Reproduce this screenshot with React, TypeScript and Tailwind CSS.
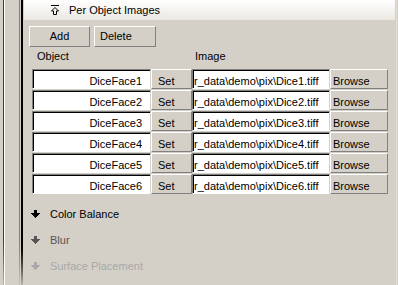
import React from "react";

const rows = [1, 2, 3, 4, 5, 6];

function DownArrow({ color }: { color: string }) {
  return (
    <svg width="9" height="8" viewBox="0 0 9 8" className="block" shapeRendering="crispEdges">
      <rect x="3" y="0" width="3" height="3" fill={color} />
      <rect x="0" y="3" width="9" height="1" fill={color} />
      <rect x="1" y="4" width="7" height="1" fill={color} />
      <rect x="2" y="5" width="5" height="1" fill={color} />
      <rect x="3" y="6" width="3" height="1" fill={color} />
      <rect x="4" y="7" width="1" height="1" fill={color} />
    </svg>
  );
}

function CollapseIcon() {
  return (
    <svg width="8" height="10" viewBox="0 0 8 10" className="block">
      <line x1="0" y1="0.5" x2="8" y2="0.5" stroke="#000" strokeWidth="1" />
      <path d="M4 2.5 L0.5 6 H2.5 V9.5 H5.5 V6 H7.5 Z" fill="none" stroke="#000" strokeWidth="1" />
    </svg>
  );
}

export default function App() {
  return (
    <div
      className="flex w-[398px] h-[285px] overflow-hidden bg-[#d4d0c8] text-[11px] leading-[13px] text-black"
      style={{ fontFamily: '"Liberation Sans", Arial, sans-serif' }}
    >
      {/* left strip */}
      <div className="flex h-full shrink-0">
        <div className="w-[3px] bg-[#d4d0c8]" />
        <div className="w-[1px] bg-linear-to-b from-[#404040] from-85% to-[#b8b5ae]" />
        <div className="w-[1px] bg-white" />
        <div className="w-[14px] bg-[#d4d0c8]" />
        <div className="w-[1px] bg-linear-to-b from-[#808080] from-85% to-[#c4c1ba]" />
        <div className="w-[1px] bg-[#d4d0c8]" />
        <div className="w-[2px] bg-linear-to-b from-black from-85% to-[#b8b5ae]" />
      </div>

      {/* main */}
      <div className="flex flex-col w-[372px] shrink-0">
        <div className="ml-[1px] h-[20px] flex items-center bg-linear-to-b from-white to-[#ebe8e1]">
          <div className="ml-[27px] w-[8px]">
            <CollapseIcon />
          </div>
          <span className="ml-[10px]">Per Object Images</span>
        </div>

        <div className="flex gap-[4px] mt-[6px] ml-[6px]">
          <button className="w-[61px] h-[21px] border border-t-white border-l-white border-b-[#808080] border-r-[#808080] bg-[#d4d0c8] text-center">
            Add
          </button>
          <button className="w-[62px] h-[21px] border border-t-white border-l-white border-b-[#808080] border-r-[#808080] bg-[#d4d0c8] text-left pl-[5px]">
            Delete
          </button>
        </div>

        <div className="flex ml-[9px] h-[22px] pt-[3px]">
          <div className="w-[160px] pl-[5px]">Object</div>
          <div className="pl-[3px]">Image</div>
        </div>

        <div className="flex flex-col gap-[1px] ml-[9px]">
          {rows.map((n) => (
            <div key={n} className="flex h-[20px]">
              <div className="w-[119px] h-full bg-white border border-t-[#808080] border-l-[#808080] border-b-white border-r-[#d4d0c8] shadow-[inset_1px_1px_0_#000] flex justify-end pr-[8px] pt-[5px]">
                DiceFace{n}
              </div>
              <div className="w-[41px] h-full border border-t-white border-l-white border-b-[#808080] border-r-[#808080] pl-[6px] pt-[5px]">
                Set
              </div>
              <div className="w-[138px] h-full bg-white border border-t-[#808080] border-l-[#808080] border-b-white border-r-[#d4d0c8] shadow-[inset_1px_1px_0_#000] overflow-hidden whitespace-nowrap pt-[5px] pl-[1px]">
                <span>{`r_data\\demo\\pix\\Dice${n}.tiff`}</span>
              </div>
              <div className="w-[58px] h-full border border-t-white border-l-white border-b-[#808080] border-r-[#808080] pl-[2px] pt-[5px]">
                Browse
              </div>
            </div>
          ))}
        </div>

        <div className="flex flex-col mt-[7px]">
          {[
            { label: "Color Balance", color: "#000000" },
            { label: "Blur", color: "#555555" },
            { label: "Surface Placement", color: "#a8a8a8" },
          ].map((s) => (
            <div key={s.label} className="flex items-center h-[26px]">
              <div className="ml-[8px] w-[9px]">
                <DownArrow color={s.color} />
              </div>
              <span className="ml-[10px]" style={{ color: s.color }}>
                {s.label}
              </span>
            </div>
          ))}
        </div>
      </div>

      {/* right strip */}
      <div className="flex h-full shrink-0">
        <div className="w-[1px] bg-[#d4d0c8]" />
        <div className="w-[1px] bg-[#e2dfd9]" />
        <div className="w-[1px] bg-[#d4d0c8]" />
      </div>
    </div>
  );
}
